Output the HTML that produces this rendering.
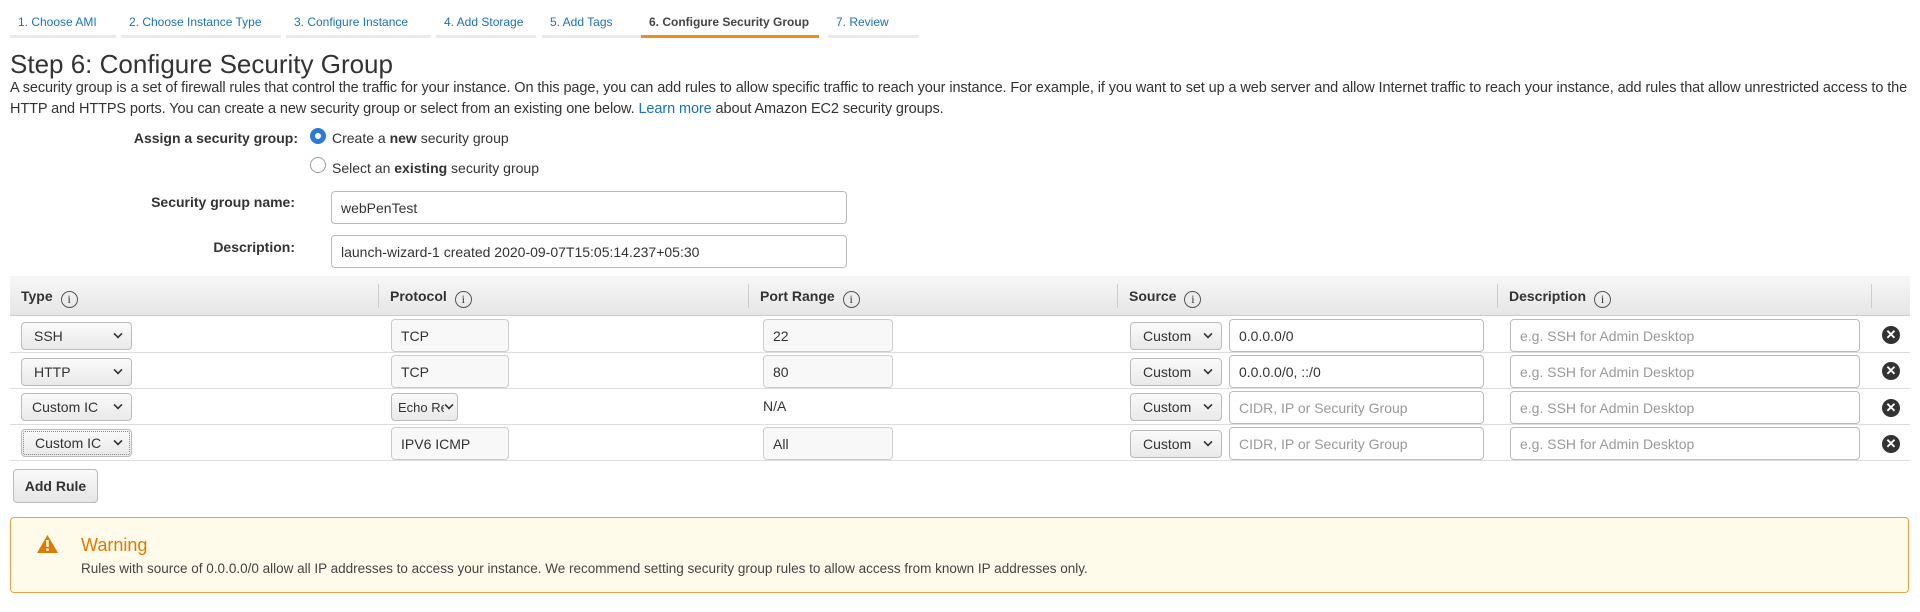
<!DOCTYPE html>
<html><head><meta charset="utf-8"><style>
*{box-sizing:border-box;margin:0;padding:0}
body{width:1920px;height:612px;background:#fff;font-family:"Liberation Sans",Arial,sans-serif;color:#444;position:relative;overflow:hidden;font-size:14px}
.a{position:absolute}
.tab{position:absolute;top:10px;height:28px;border-bottom:3px solid #eaeaea;color:#1a73b5;font-size:12px;line-height:24px;padding-left:8px;white-space:nowrap}
.tab.on{border-bottom-color:#ec8e1d;color:#444;font-weight:bold}
h1{position:absolute;left:10px;top:49px;font-size:26px;font-weight:normal;color:#333}
.p{left:10px;top:78px;width:1900px;line-height:21px;font-size:14.5px;color:#333;letter-spacing:-0.1px}
.lbl{font-weight:bold;font-size:14px;color:#333;text-align:right;white-space:nowrap}
.in{position:absolute;border:1px solid #bbb;border-radius:4px;background:#fff;font-size:14px;padding-left:9px;display:flex;align-items:center;color:#333;white-space:nowrap;overflow:hidden}
.ro{background:#f8f8f8;border-color:#ccc}
.ph{color:#999}
.sel{position:absolute;border:1px solid #bbb;border-radius:4px;background:linear-gradient(#fafafa,#e9e9e9);font-size:14px;padding-left:12px;display:flex;align-items:center;color:#333;height:28px}
.sel .c{position:absolute;right:9px;top:7px;width:8px;height:8px;border-right:2px solid #333;border-bottom:2px solid #333;transform:rotate(45deg) scale(.8)}
.th{position:absolute;top:276px;left:10px;width:1900px;height:40px;background:linear-gradient(#f7f7f7,#e6e6e6);border-bottom:1px solid #ccc}
.hc{position:absolute;top:12px;font-weight:bold;font-size:14px;color:#333}
.sep{position:absolute;top:8px;width:1px;height:24px;background:#ccc}
.i{display:inline-block;width:17px;height:17px;border:1px solid #555;border-radius:50%;font-size:12px;font-weight:normal;text-align:center;line-height:15px;margin-left:8px;vertical-align:-2px;font-family:"Liberation Serif",serif}
.row{position:absolute;left:10px;width:1900px;border-bottom:1px solid #ddd}
.x{position:absolute;left:1882px;width:18px;height:18px;border-radius:50%;background:#333;color:#fff;font-size:13px;line-height:18px;text-align:center;font-weight:bold}
.radio{position:absolute;width:16px;height:16px;border-radius:50%}
</style></head><body>
<div class="tab" style="left:10px;width:106px">1. Choose AMI</div>
<div class="tab" style="left:121px;width:160px">2. Choose Instance Type</div>
<div class="tab" style="left:286px;width:145px">3. Configure Instance</div>
<div class="tab" style="left:436px;width:100px">4. Add Storage</div>
<div class="tab" style="left:542px;width:100px">5. Add Tags</div>
<div class="tab on" style="left:641px;width:178px">6. Configure Security Group</div>
<div class="tab" style="left:828px;width:91px">7. Review</div>
<h1>Step 6: Configure Security Group</h1>
<div class="a p">A security group is a set of firewall rules that control the traffic for your instance. On this page, you can add rules to allow specific traffic to reach your instance. For example, if you want to set up a web server and allow Internet traffic to reach your instance, add rules that allow unrestricted access to the HTTP and HTTPS ports. You can create a new security group or select from an existing one below. <span style="color:#1a73b5">Learn more</span> about Amazon EC2 security groups.</div>
<div class="a lbl" style="left:40px;top:130px;width:258px">Assign a security group:</div>
<div class="radio" style="left:310px;top:128px;border:5px solid #2d7ad6"></div>
<div class="a" style="left:332px;top:130px;color:#333">Create a <b>new</b> security group</div>
<div class="radio" style="left:310px;top:157px;border:1px solid #999"></div>
<div class="a" style="left:332px;top:160px;color:#333">Select an <b>existing</b> security group</div>
<div class="a lbl" style="left:60px;top:194px;width:235px">Security group name:</div>
<div class="in" style="left:331px;top:191px;width:516px;height:33px">webPenTest</div>
<div class="a lbl" style="left:60px;top:239px;width:235px">Description:</div>
<div class="in" style="left:331px;top:235px;width:516px;height:33px">launch-wizard-1 created 2020-09-07T15:05:14.237+05:30</div>
<div class="th">
<div class="hc" style="left:11px">Type<span class="i">i</span></div>
<div class="sep" style="left:368px"></div><div class="hc" style="left:380px">Protocol<span class="i">i</span></div>
<div class="sep" style="left:738px"></div><div class="hc" style="left:750px">Port Range<span class="i">i</span></div>
<div class="sep" style="left:1107px"></div><div class="hc" style="left:1119px">Source<span class="i">i</span></div>
<div class="sep" style="left:1487px"></div><div class="hc" style="left:1499px">Description<span class="i">i</span></div>
<div class="sep" style="left:1861px"></div>
</div>
<div class="row" style="top:316px;height:37px"></div>
<div class="row" style="top:353px;height:36px"></div>
<div class="row" style="top:389px;height:36px"></div>
<div class="row" style="top:425px;height:36px"></div>
<!-- row1 -->
<div class="sel" style="left:21px;top:322px;width:111px">SSH<i class="c"></i></div>
<div class="in ro" style="left:391px;top:319px;width:118px;height:33px">TCP</div>
<div class="in ro" style="left:763px;top:319px;width:130px;height:33px">22</div>
<div class="sel" style="left:1130px;top:322px;width:92px">Custom<i class="c"></i></div>
<div class="in" style="left:1229px;top:319px;width:255px;height:33px">0.0.0.0/0</div>
<div class="in ph" style="left:1510px;top:319px;width:350px;height:33px">e.g. SSH for Admin Desktop</div>
<div class="x" style="top:326px">✕</div>
<!-- row2 -->
<div class="sel" style="left:21px;top:358px;width:111px">HTTP<i class="c"></i></div>
<div class="in ro" style="left:391px;top:355px;width:118px;height:33px">TCP</div>
<div class="in ro" style="left:763px;top:355px;width:130px;height:33px">80</div>
<div class="sel" style="left:1130px;top:358px;width:92px">Custom<i class="c"></i></div>
<div class="in" style="left:1229px;top:355px;width:255px;height:33px">0.0.0.0/0, ::/0</div>
<div class="in ph" style="left:1510px;top:355px;width:350px;height:33px">e.g. SSH for Admin Desktop</div>
<div class="x" style="top:362px">✕</div>
<!-- row3 -->
<div class="sel" style="left:21px;top:393px;width:111px;padding-left:10px;overflow:hidden;white-space:nowrap">Custom IC<i class="c" style="background:#f0f0f0"></i></div>
<div class="sel" style="left:391px;top:393px;width:67px;padding-left:6px;overflow:hidden;white-space:nowrap;font-size:13px"><span style="display:inline-block;width:46px;overflow:hidden">Echo Rep</span><i class="c" style="right:4px"></i></div>
<div class="a" style="left:763px;top:398px;color:#333">N/A</div>
<div class="sel" style="left:1130px;top:393px;width:92px">Custom<i class="c"></i></div>
<div class="in ph" style="left:1229px;top:391px;width:255px;height:33px">CIDR, IP or Security Group</div>
<div class="in ph" style="left:1510px;top:391px;width:350px;height:33px">e.g. SSH for Admin Desktop</div>
<div class="x" style="top:399px">✕</div>
<!-- row4 -->
<div class="sel" style="left:21px;top:429px;width:111px;padding-left:13px;overflow:hidden;white-space:nowrap;outline:1px dotted #888;outline-offset:-3px">Custom IC<i class="c" style="background:#f0f0f0"></i></div>
<div class="in ro" style="left:391px;top:427px;width:118px;height:33px">IPV6 ICMP</div>
<div class="in ro" style="left:763px;top:427px;width:130px;height:33px">All</div>
<div class="sel" style="left:1130px;top:430px;width:92px">Custom<i class="c"></i></div>
<div class="in ph" style="left:1229px;top:427px;width:255px;height:33px">CIDR, IP or Security Group</div>
<div class="in ph" style="left:1510px;top:427px;width:350px;height:33px">e.g. SSH for Admin Desktop</div>
<div class="x" style="top:435px">✕</div>
<div class="a" style="left:13px;top:469px;width:85px;height:34px;border:1px solid #bbb;border-radius:4px;background:linear-gradient(#fafafa,#e6e6e6);font-weight:bold;color:#333;text-align:center;line-height:32px;font-size:14px">Add Rule</div>
<div class="a" style="left:10px;top:517px;width:1899px;height:76px;background:#fffbea;border:1px solid #e8a14a;border-radius:4px">
<svg class="a" style="left:26px;top:17px" width="21" height="18" viewBox="0 0 21 18"><path d="M10.5 0 L21 18 L0 18 Z" fill="#df7a00"/><rect x="9.3" y="5" width="2.4" height="7" fill="#fff"/><rect x="9.3" y="13.5" width="2.4" height="2.4" fill="#fff"/></svg>
<div class="a" style="left:70px;top:17px;color:#df7a00;font-size:18px">Warning</div>
<div class="a" style="left:70px;top:43px;color:#444;font-size:13.5px">Rules with source of 0.0.0.0/0 allow all IP addresses to access your instance. We recommend setting security group rules to allow access from known IP addresses only.</div>
</div>
</body></html>
